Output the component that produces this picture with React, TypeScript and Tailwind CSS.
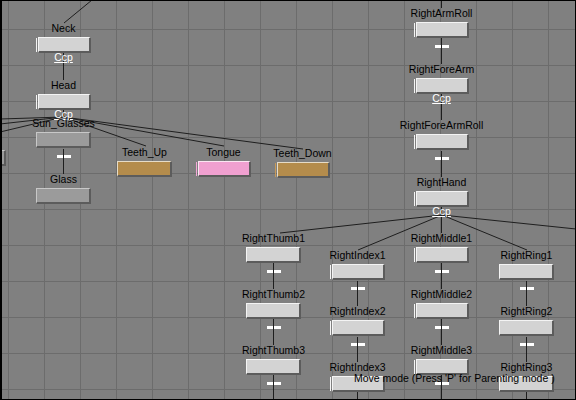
import React from 'react'

type Tone = 'gray' | 'dark' | 'tan' | 'pink'

type Bone = {
  label: string
  pos: string
  tone: Tone
  mark?: boolean
  below?: 'ccp' | 'dash'
}

// box top-left = (left, top + 15)
const BONES: Bone[] = [
  { label: 'Neck', pos: 'left-[36px] top-[22px]', tone: 'gray', mark: true, below: 'ccp' },
  { label: 'Head', pos: 'left-[36px] top-[79px]', tone: 'gray', mark: true, below: 'ccp' },
  { label: 'Sun_Glasses', pos: 'left-[36px] top-[117px]', tone: 'dark', below: 'dash' },
  { label: 'Glass', pos: 'left-[36px] top-[173px]', tone: 'dark' },
  { label: '', pos: 'left-[-49px] top-[135px]', tone: 'dark' },
  { label: 'Teeth_Up', pos: 'left-[117px] top-[146px]', tone: 'tan' },
  { label: 'Tongue', pos: 'left-[196px] top-[146px]', tone: 'pink', mark: true },
  { label: 'Teeth_Down', pos: 'left-[275px] top-[147px]', tone: 'tan', mark: true },
  { label: 'RightArmRoll', pos: 'left-[414px] top-[7px]', tone: 'gray', mark: true, below: 'dash' },
  { label: 'RightForeArm', pos: 'left-[414px] top-[63px]', tone: 'gray', mark: true, below: 'ccp' },
  { label: 'RightForeArmRoll', pos: 'left-[414px] top-[119px]', tone: 'gray', mark: true, below: 'dash' },
  { label: 'RightHand', pos: 'left-[414px] top-[176px]', tone: 'gray', mark: true, below: 'ccp' },
  { label: 'RightThumb1', pos: 'left-[246px] top-[232px]', tone: 'gray', below: 'dash' },
  { label: 'RightThumb2', pos: 'left-[246px] top-[288px]', tone: 'gray', below: 'dash' },
  { label: 'RightThumb3', pos: 'left-[246px] top-[344px]', tone: 'gray', below: 'dash' },
  { label: 'RightIndex1', pos: 'left-[330px] top-[249px]', tone: 'gray', mark: true, below: 'dash' },
  { label: 'RightIndex2', pos: 'left-[330px] top-[305px]', tone: 'gray', mark: true, below: 'dash' },
  { label: 'RightIndex3', pos: 'left-[330px] top-[361px]', tone: 'gray', mark: true },
  { label: 'RightMiddle1', pos: 'left-[414px] top-[232px]', tone: 'gray', mark: true, below: 'dash' },
  { label: 'RightMiddle2', pos: 'left-[414px] top-[288px]', tone: 'gray', mark: true, below: 'dash' },
  { label: 'RightMiddle3', pos: 'left-[414px] top-[344px]', tone: 'gray', mark: true, below: 'dash' },
  { label: 'RightRing1', pos: 'left-[499px] top-[249px]', tone: 'gray', below: 'dash' },
  { label: 'RightRing2', pos: 'left-[499px] top-[305px]', tone: 'gray', below: 'dash' },
  { label: 'RightRing3', pos: 'left-[499px] top-[361px]', tone: 'gray' },
]

const FILL: Record<Tone, string> = {
  gray: 'bg-[#d3d3d3] border-t-[#f4f4f4] border-l-[#f4f4f4]',
  dark: 'bg-[#9b9b9b] border-t-[#c8c8c8] border-l-[#c8c8c8]',
  tan: 'bg-[#b48c4c] border-t-[#e6dcc8] border-l-[#e6dcc8]',
  pink: 'bg-[#f0a0d0] border-t-[#fbe6f2] border-l-[#fbe6f2]',
}

const MARK: Record<Tone, string> = {
  gray: 'bg-[#f4f4f4]',
  dark: 'bg-[#c8c8c8]',
  tan: 'bg-[#c89a58]',
  pink: 'bg-[#f4a8d8]',
}

// parent links, in canvas pixels
const LINKS: [number, number, number, number][] = [
  [92, 0, 64, 23],
  [63.5, 53, 63.5, 80],
  [63.5, 110, 63.5, 118],
  [63, 117, 0, 119],
  [63, 117, 0, 124],
  [63, 117, 0, 132],
  [63, 117, 146, 146],
  [63, 117, 224, 146],
  [63, 117, 303, 149],
  [63.5, 149, 63.5, 174],
  [441.5, 0, 441.5, 8],
  [441.5, 38, 441.5, 64],
  [441.5, 94, 441.5, 120],
  [441.5, 151, 441.5, 177],
  [441.5, 207, 441.5, 233],
  [442, 215, 280, 233],
  [442, 215, 358, 250],
  [442, 215, 527, 250],
  [442, 215, 576, 229],
  [273.5, 263, 273.5, 289],
  [273.5, 319, 273.5, 345],
  [273.5, 375, 273.5, 400],
  [357.5, 281, 357.5, 306],
  [357.5, 337, 357.5, 362],
  [357.5, 392, 357.5, 400],
  [441.5, 263, 441.5, 289],
  [441.5, 319, 441.5, 345],
  [441.5, 375, 441.5, 400],
  [526.5, 281, 526.5, 306],
  [526.5, 337, 526.5, 362],
  [526.5, 392, 526.5, 400],
]

function BoneNode({ bone }: { bone: Bone }) {
  return (
    <div className={`absolute flex w-[55px] flex-col items-center ${bone.pos}`}>
      <div className="h-[12px] whitespace-nowrap text-[10.5px] leading-[12px] text-black">{bone.label}</div>
      <div className="mt-[3px] flex h-[16px] w-[55px]">
        {bone.mark && <div className={`my-px mr-px w-px ${MARK[bone.tone]}`} />}
        <div
          className={`flex-1 border-t border-l border-r-2 border-b-2 border-r-[#5c5c5c] border-b-[#5c5c5c] ${FILL[bone.tone]}`}
        />
      </div>
      {bone.below === 'ccp' && (
        <div className="mt-[-2px] h-[12px] text-[10.5px] leading-[12px] text-white underline underline-offset-1">
          Ccp
        </div>
      )}
      {bone.below === 'dash' && (
        <div className="mt-[7px] ml-[1px] flex h-[3px] w-[14px] gap-px">
          <div className="w-[6px] bg-white" />
          <div className="w-[7px] bg-white" />
        </div>
      )}
    </div>
  )
}

export default function App() {
  const cols = Array.from({ length: 16 }, (_, i) => 8.5 + i * 36)
  const rows = Array.from({ length: 11 }, (_, i) => 29.5 + i * 36)

  return (
    <div className="relative h-[400px] w-[576px] overflow-hidden bg-[#808080] font-['Liberation_Sans',Arial,sans-serif]">
      <svg className="absolute inset-0" width={576} height={400}>
        {cols.map((x) => (
          <line key={`c${x}`} x1={x} y1={0} x2={x} y2={400} stroke="#6c6c6c" strokeWidth={1} />
        ))}
        {rows.map((y) => (
          <line key={`r${y}`} x1={0} y1={y} x2={576} y2={y} stroke="#6c6c6c" strokeWidth={1} />
        ))}
        {LINKS.map(([x1, y1, x2, y2], i) => (
          <line key={i} x1={x1} y1={y1} x2={x2} y2={y2} stroke="#1e1e1e" strokeWidth={1} />
        ))}
      </svg>

      {BONES.map((b, i) => (
        <BoneNode key={i} bone={b} />
      ))}

      <div className="absolute left-[354px] top-[372px] whitespace-nowrap text-[10.5px] leading-[12px] text-black">
        Move mode (Press 'P' for Parenting mode )
      </div>

      <div className="pointer-events-none absolute inset-0 border-t border-r border-b border-l-2 border-black" />
    </div>
  )
}
